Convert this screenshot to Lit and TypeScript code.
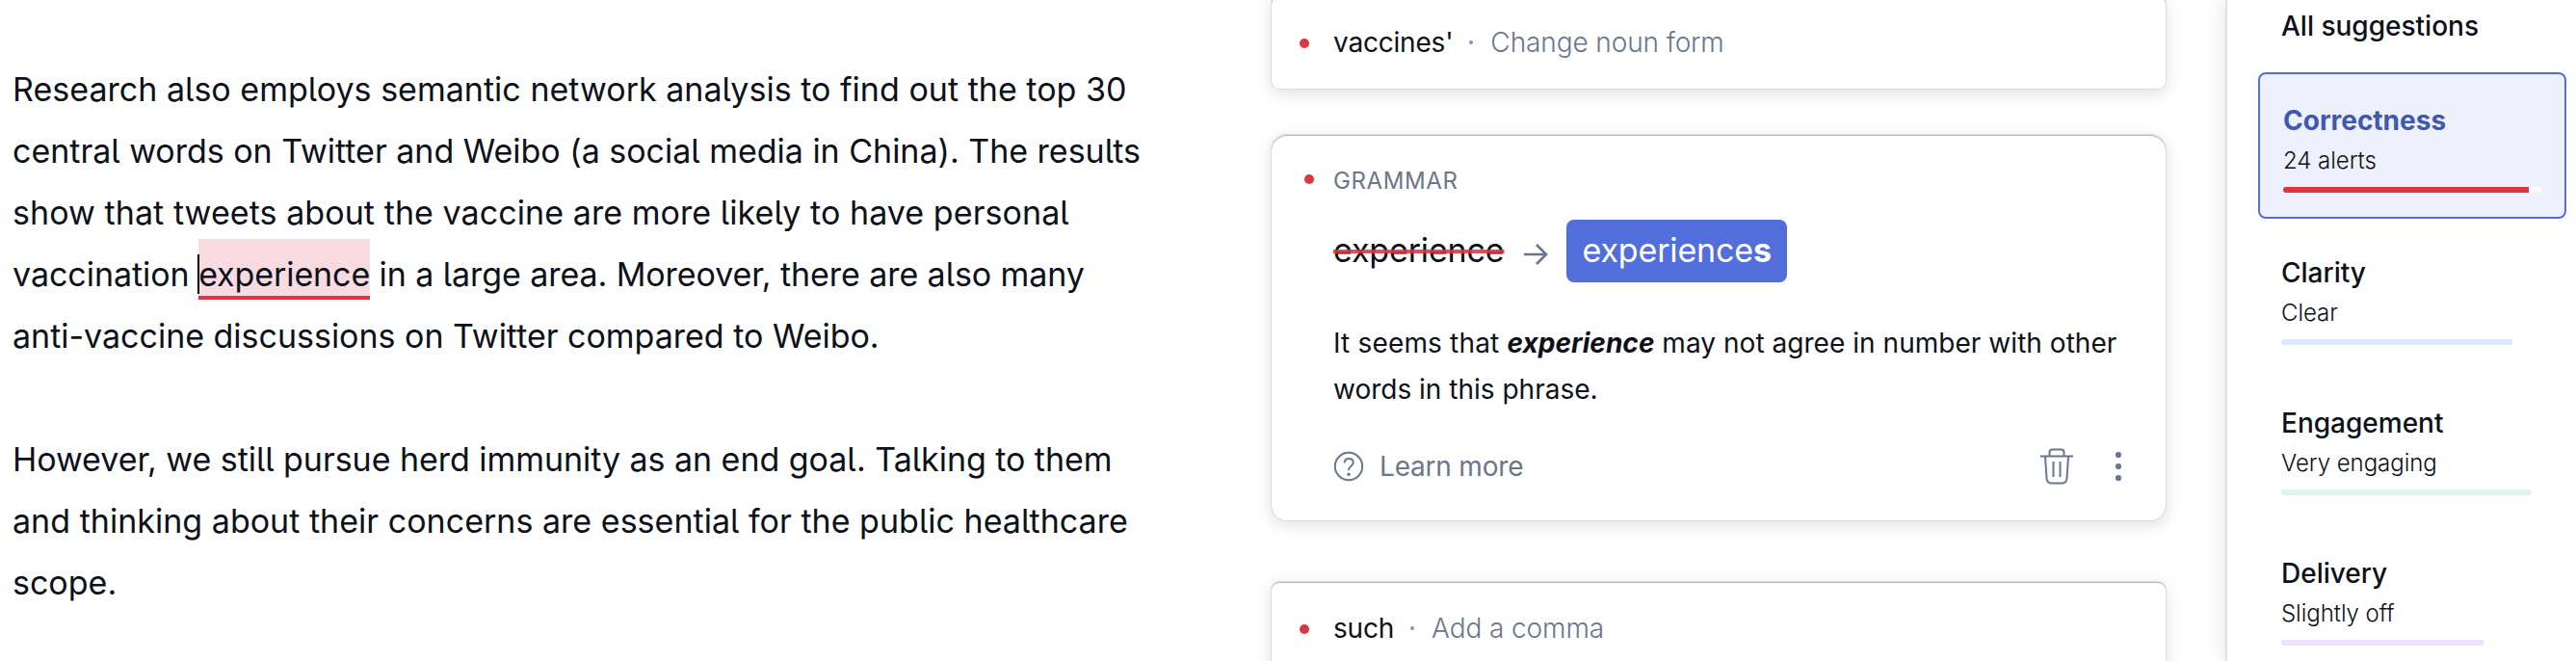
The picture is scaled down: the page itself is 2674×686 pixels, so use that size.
import { LitElement, html, css, nothing } from "lit";
import { customElement, property } from "lit/decorators.js";

interface Category {
  name: string;
  status: string;
  tone: string;
  fill: number;
  active?: boolean;
}

const CATEGORIES: Category[] = [
  { name: "Correctness", status: "24 alerts", tone: "red", fill: 255, active: true },
  { name: "Clarity", status: "Clear", tone: "blue", fill: 239.5 },
  { name: "Engagement", status: "Very engaging", tone: "green", fill: 258.5 },
  { name: "Delivery", status: "Slightly off", tone: "purple", fill: 210 },
];

@customElement("document-text")
export class DocumentText extends LitElement {
  static styles = css`
    :host {
      display: block;
      box-sizing: border-box;
      padding: 61px 0 0 13px;
      font-size: 34px;
      line-height: 64px;
      color: #0e101a;
      white-space: nowrap;
      font-feature-settings: "cv05";
    }
    p { margin: 0 0 64px; }
    .line { display: block; }
    .snug { letter-spacing: -0.015px; }
    .close { letter-spacing: -0.045px; }
    .tight { letter-spacing: -0.08px; }
    .open { letter-spacing: 0.02px; }
    .loose { letter-spacing: 0.07px; }
    .issue {
      position: relative;
      padding: 16px 0 2px;
      background: #f8dae1;
      border-bottom: 4px solid #dc3640;
      letter-spacing: -0.1px;
    }
    .issue::before {
      content: "";
      position: absolute;
      left: -1px;
      top: 16px;
      width: 2px;
      height: 41px;
      background: #000;
    }
  `;

  render() {
    return html`
      <p>
        <span class="line open">Research also employs semantic network analysis to find out the top 30</span>
        <span class="line snug">central words on Twitter and Weibo (a social media in China). The results</span>
        <span class="line loose">show that tweets about the vaccine are more likely to have personal</span>
        <span class="line tight"><span class="close">vaccination </span><span class="issue">experience</span> in a large area. Moreover, there are also many</span>
        <span class="line snug">anti-vaccine discussions on Twitter compared to Weibo.</span>
      </p>
      <p>
        <span class="line close">However, we still pursue herd immunity as an end goal. Talking to them</span>
        <span class="line open">and thinking about their concerns are essential for the public healthcare</span>
        <span class="line">scope.</span>
      </p>
    `;
  }
}

@customElement("collapsed-card")
export class CollapsedCard extends LitElement {
  @property() word = "";
  @property() action = "";

  static styles = css`
    :host {
      display: flex;
      align-items: center;
      box-sizing: border-box;
      height: 96px;
      padding-left: 29px;
      border-radius: 8px;
      background: #fff;
      font-size: 28px;
      line-height: 40px;
      white-space: nowrap;
    }
    .dot { width: 10px; height: 10px; margin: 2px 25px 0 0; border-radius: 50%; background: #dc3640; }
    .word { color: #0e101a; letter-spacing: -0.2px; }
    .sep { width: 4px; height: 4px; margin: 0 18px 0 17px; border-radius: 50%; background: #8e94ad; }
    .action { color: #6d758d; font-weight: 300; letter-spacing: -0.1px; }
  `;

  render() {
    return html`
      <span class="dot"></span><span class="word">${this.word}</span><span class="sep"></span><span class="action">${this.action}</span>
    `;
  }
}

@customElement("grammar-card")
export class GrammarCard extends LitElement {
  static styles = css`
    :host {
      display: flex;
      flex-direction: column;
      box-sizing: border-box;
      height: 400px;
      padding: 31px 45px 0 34px;
      border-radius: 16px;
      background: #fff;
      color: #0e101a;
      white-space: nowrap;
    }
    .head { display: flex; align-items: center; height: 32px; }
    .dot { width: 10px; height: 10px; margin: -2px 20px 0 0; border-radius: 50%; background: #dc3640; }
    .kind { font-size: 24px; letter-spacing: 0.6px; color: #6d758d; }
    .fix { display: flex; align-items: center; height: 65px; margin: 25px 0 0 30px; font-size: 34px; letter-spacing: -0.15px; line-height: 40px; }
    .wrong {
      margin-top: -2px;
      text-decoration: line-through;
      text-decoration-color: rgba(220, 54, 64, 0.88);
      text-decoration-thickness: 4px;
    }
    .arrow { margin: 7px 19px 0 20px; stroke-width: 2.6; }
    .right {
      display: flex;
      align-items: center;
      box-sizing: border-box;
      height: 65px;
      padding: 0 16px 2px;
      border-radius: 8px;
      background: #526edb;
      color: #fff;
    }
    .right b { font-weight: 700; }
    .why { margin: 39px 0 0 30px; font-size: 28px; line-height: 48px; }
    .lead { letter-spacing: 0.17px; }
    .rest { letter-spacing: 0.04px; }
    .why b { font-style: italic; font-weight: 700; letter-spacing: 0.05px; }
    .foot { display: flex; align-items: center; height: 40px; margin: 36px 0 0 30px; color: #6d758d; font-size: 28px; }
    .learn { display: flex; align-items: center; gap: 16px; flex: 1; letter-spacing: -0.2px; }
    svg { display: block; fill: none; stroke: #6d758d; stroke-width: 2; }
    .filled { fill: #6d758d; stroke: none; }
    .more { margin-left: 43px; }
  `;

  render() {
    return html`
      <div class="head"><span class="dot"></span><span class="kind">GRAMMAR</span></div>
      <div class="fix">
        <span class="wrong">experience</span>
        <svg class="arrow" width="26" height="24" viewBox="0 0 26 24">
          <path d="M1 12H24M14 2l10 10-10 10" />
        </svg>
        <span class="right"><span>experience<b>s</b></span></span>
      </div>
      <div class="why">
        <span class="lead">It seems that </span><b>experience</b><span class="rest"> may not agree in number with other</span><br />words in this phrase.
      </div>
      <div class="foot">
        <span class="learn">
          <svg width="32" height="32" viewBox="0 0 32 32">
            <circle cx="16" cy="16" r="14.2" />
            <path d="M11.6 12.6C11.6 9.8 13.4 8 16.1 8s4.6 1.7 4.6 4.1c0 3.8-4.8 3.4-4.8 7.6v.6" />
            <circle class="filled" cx="16" cy="24.2" r="1.7" />
          </svg>
          <span>Learn more</span>
        </span>
        <svg width="34" height="38" viewBox="0 0 34 38">
          <path d="M0 8.5h34M9.500 8V4.500Q9.500 1.500 12.500 1.500h9Q24.500 1.500 24.500 4.500V8M5 9l1.500 22.500Q7 36.500 11.500 36.500h11Q27 36.500 27.500 31.500L29 9M13.500 14v16M20.500 14v16" />
        </svg>
        <svg class="more" width="8" height="32" viewBox="0 0 8 32">
          <g class="filled">
            <circle cx="4" cy="4" r="3.1" /><circle cx="4" cy="16" r="3.1" /><circle cx="4" cy="28" r="3.1" />
          </g>
        </svg>
      </div>
    `;
  }
}

@customElement("category-item")
export class CategoryItem extends LitElement {
  @property({ attribute: false }) item!: Category;

  static styles = css`
    .item { box-sizing: border-box; height: 152px; padding: 32px 24px 0; border-radius: 8px; white-space: nowrap; }
    .active { padding-top: 28px; border: 2px solid #526edb; background: #eef1fb; }
    .name { font-size: 28px; line-height: 40px; font-weight: 500; }
    .active .name { font-weight: 700; color: #3f58b0; }
    .status { margin-top: 2px; font-size: 24px; line-height: 40px; font-weight: 300; letter-spacing: -0.04px; }
    .track { width: 268px; height: 6px; margin-top: 7px; border-radius: 3px; overflow: hidden; }
    .active .track { background: #fff; }
    .fill { height: 6px; }
    .red { background: #dc3640; }
    .blue { background: #dee9fd; }
    .green { background: #dcf6ef; }
    .purple { background: #efe0fc; }
  `;

  render() {
    const c = this.item;
    if (!c) return nothing;
    return html`
      <div class="item ${c.active ? "active" : ""}">
        <div class="name">${c.name}</div>
        <div class="status">${c.status}</div>
        <div class="track"><div class="fill ${c.tone}" style="width:${c.fill}px"></div></div>
      </div>
    `;
  }
}

@customElement("app-root")
export class AppRoot extends LitElement {
  static styles = css`
    :host {
      display: flex;
      width: 2674px;
      height: 686px;
      overflow: hidden;
      background: #fff;
      color: #0e101a;
      font-family: Inter, sans-serif;
    }
    document-text { width: 1320px; flex: none; }
    .cards {
      display: flex;
      flex-direction: column;
      width: 928px;
      flex: none;
      margin-top: -4px;
    }
    .cards > * {
      flex: none;
      box-shadow: inset 0 1px 0 #b8b8b8, 0 0 0 1px #dcdee0, 0 4px 16px rgba(30, 45, 60, 0.17);
    }
    grammar-card { margin: 48px 0 64px; }
    aside {
      box-sizing: border-box;
      width: 364px;
      margin-left: 62px;
      padding-left: 32px;
      border-left: 2px solid #e0e0e0;
      box-shadow: 0 0 20px rgba(0, 0, 0, 0.12);
      background: #fff;
    }
    .all { height: 75px; padding-left: 24px; font-size: 28px; line-height: 54px; font-weight: 500; box-sizing: border-box; }
    .list { display: flex; flex-direction: column; gap: 4px; width: 320px; }
  `;

  render() {
    return html`
      <document-text></document-text>
      <main class="cards">
        <collapsed-card word="vaccines'" action="Change noun form"></collapsed-card>
        <grammar-card></grammar-card>
        <collapsed-card word="such" action="Add a comma"></collapsed-card>
      </main>
      <aside>
        <div class="all">All suggestions</div>
        <div class="list">${CATEGORIES.map((c) => html`<category-item .item=${c}></category-item>`)}</div>
      </aside>
    `;
  }
}
